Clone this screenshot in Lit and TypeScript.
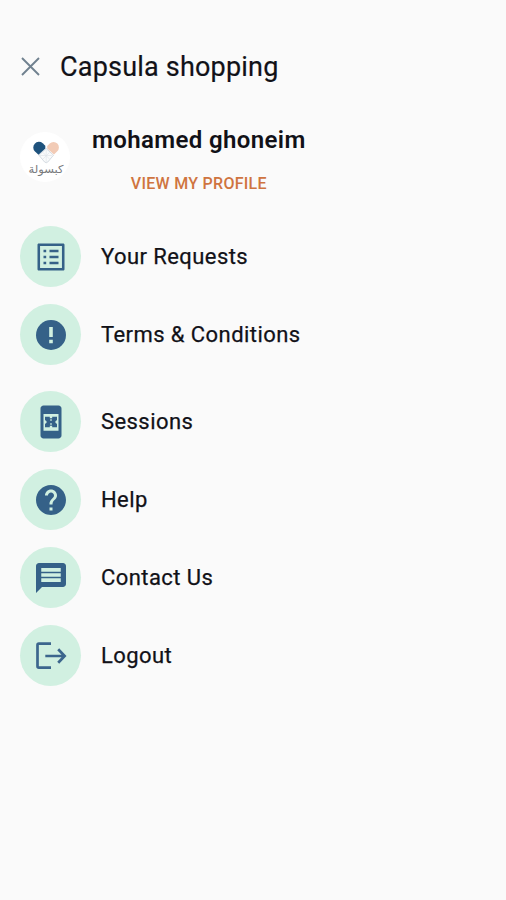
import { LitElement, html, svg, css } from "lit";
import { customElement, property } from "lit/decorators.js";

const icons: Record<string, unknown> = {
  list: svg`<path d="M19.3 4.7v14.6H4.7V4.7h14.6m.9-1.7H3.8c-.5 0-.8.4-.8.9v16.2c0 .5.4.9.9.9h16.2c.5 0 .9-.4.9-.9V3.9c0-.5-.4-.9-.8-.9zM11 7.2h6v1.6h-6zm0 4h6v1.6h-6zm0 4h6v1.6h-6zM7 7.1h1.8v1.8H7zm0 4h1.8v1.8H7zm0 4h1.8v1.8H7z"/>`,
  alert: svg`<circle cx="12" cy="12" r="10"/><path class="gap" d="M10.8 6.7h2.4v6.7h-2.4zM10.8 15.2h2.4v2.3h-2.4z"/>`,
  session: svg`<path fill-rule="evenodd" d="M17 1H7c-1.1 0-2 .9-2 2v18c0 1.1.9 2 2 2h10c1.1 0 2-.9 2-2V3c0-1.1-.9-2-2-2zm0 16.8H7V6.6h10z"/><path d="M8 8.5h3.2v1h1.6v-1H16v2.3c-.8.2-1.1.6-1.1 1.2s.3 1 1.1 1.2v2.3h-3.2v-1h-1.6v1H8v-2.3c.8-.2 1.1-.6 1.1-1.2S8.8 11 8 10.8z"/><path class="gap" d="M11.5 10.2h1v1h-1zm0 2.6h1v1h-1z"/>`,
  help: svg`<path d="M12 2C6.48 2 2 6.48 2 12s4.48 10 10 10 10-4.48 10-10S17.52 2 12 2zm1 17h-2v-2h2v2zm2.07-7.75l-.9.92C13.45 12.9 13 13.5 13 15h-2v-.5c0-1.1.45-2.1 1.17-2.83l1.24-1.26c.37-.36.59-.86.59-1.41 0-1.1-.9-2-2-2s-2 .9-2 2H8c0-2.21 1.79-4 4-4s4 1.79 4 4c0 .88-.36 1.68-.93 2.25z"/>`,
  message: svg`<path d="M20 2H4c-1.1 0-2 .9-2 2v18l4-4h14c1.1 0 2-.9 2-2V4c0-1.1-.9-2-2-2zM5.5 5.3h13v2.5h-13zm0 3.5h13v2.4h-13zm0 3.4h13v2.5h-13z"/>`,
  logout: svg`<path class="line" d="M12 3.8H3.9Q3 3.8 3 4.7v14.2q0 .9.9.9H12M8.2 12H21M16.8 7.5l4.3 4.5-4.3 4.5"/>`,
};

@customElement("menu-entry")
export class MenuEntry extends LitElement {
  @property() icon = "";
  @property() label = "";

  static styles = css`
    :host { display: flex; align-items: center; height: 61px; }
    .disc {
      display: flex; align-items: center; justify-content: center;
      width: 61px; height: 61px; border-radius: 50%; background: #d1f0e1;
    }
    .glyph { width: 36px; height: 36px; fill: #356188; }
    .gap { fill: #d1f0e1; }
    .line { fill: none; stroke: #3c668d; stroke-width: 1.8; }
    .label {
      margin-left: 20px; font-size: 22px; line-height: 30px; font-weight: 400;
      letter-spacing: 0.43px; color: #111117; white-space: nowrap;
      -webkit-text-stroke: 0.25px #111117;
    }
  `;

  render() {
    return html`
      <span class="disc"><svg class="glyph" viewBox="0 0 24 24">${icons[this.icon]}</svg></span>
      <span class="label">${this.label}</span>
    `;
  }
}

@customElement("app-root")
export class AppRoot extends LitElement {
  static styles = css`
    :host {
      display: flex; flex-direction: column; box-sizing: border-box;
      height: 900px; padding: 48px 20px 0; background: #fafafa;
      font-family: Roboto, sans-serif; color: #111117;
    }
    .bar { display: flex; align-items: center; height: 38px; }
    .close { width: 20px; height: 20px; fill: none; stroke: #70818f; stroke-width: 1.9; }
    .title {
      margin: 0 0 0 20px; font-size: 27px; line-height: 38px; font-weight: 400;
      letter-spacing: 0.2px; -webkit-text-stroke: 0.2px #111117; white-space: nowrap;
    }
    .user { display: flex; height: 80px; margin-top: 38px; }
    .avatar { width: 50px; height: 50px; margin-top: 8px; border-radius: 50%; background: #fff; }
    .brand { font-family: "DejaVu Sans", sans-serif; font-size: 11px; fill: #77797c; }
    .who { display: flex; flex-direction: column; align-items: center; margin-left: 22px; }
    .name { font-size: 24px; line-height: 32px; font-weight: 600; white-space: nowrap; letter-spacing: 0.38px; }
    .profile { margin-top: 18px; font-size: 16px; line-height: 20px; font-weight: 500; letter-spacing: 0.28px; color: #cf7440; white-space: nowrap; }
    .group { display: flex; flex-direction: column; gap: 17px; margin-top: 22px; }
    .group + .group { margin-top: 26px; }
  `;

  render() {
    return html`
      <header class="bar">
        <svg class="close" viewBox="0 0 20 20"><path d="M2 1l17 17M19 1L2 18" /></svg>
        <h1 class="title">Capsula shopping</h1>
      </header>
      <section class="user">
        <svg class="avatar" viewBox="0 0 50 50">
          <path d="M26.2 16.5l7.3 6.700-5.700 6.800q-1.600 1.500-3.200 0l-5.700-6.800z" fill="#f9fafb" stroke="#ccd3db" stroke-width=".8" />
          <path d="M23 20.500l6.500 6.500M29.500 20.500L23 27M26.200 18v12M20 23.500h12" fill="none" stroke="#dde2e8" stroke-width=".6" />
          <path d="M18.500 22.800l-3.500-3.200a5.700 5.700 0 0 1 7.700-8.400l2.600 2.500v2.900z" fill="#1e527c" />
          <path d="M34 22.500l3.300-3.300a5.400 5.400 0 0 0-7.600-7.700l-2.500 2.500v2.400z" fill="#f2cbb6" />
          <text class="brand" x="26" y="41" text-anchor="middle" textLength="35" lengthAdjust="spacingAndGlyphs">كبسولة</text>
        </svg>
        <div class="who">
          <span class="name">mohamed ghoneim</span>
          <span class="profile">VIEW MY PROFILE</span>
        </div>
      </section>
      <nav class="group">
        <menu-entry icon="list" label="Your Requests"></menu-entry>
        <menu-entry icon="alert" label="Terms &amp; Conditions"></menu-entry>
      </nav>
      <nav class="group">
        <menu-entry icon="session" label="Sessions"></menu-entry>
        <menu-entry icon="help" label="Help"></menu-entry>
        <menu-entry icon="message" label="Contact Us"></menu-entry>
        <menu-entry icon="logout" label="Logout"></menu-entry>
      </nav>
    `;
  }
}
